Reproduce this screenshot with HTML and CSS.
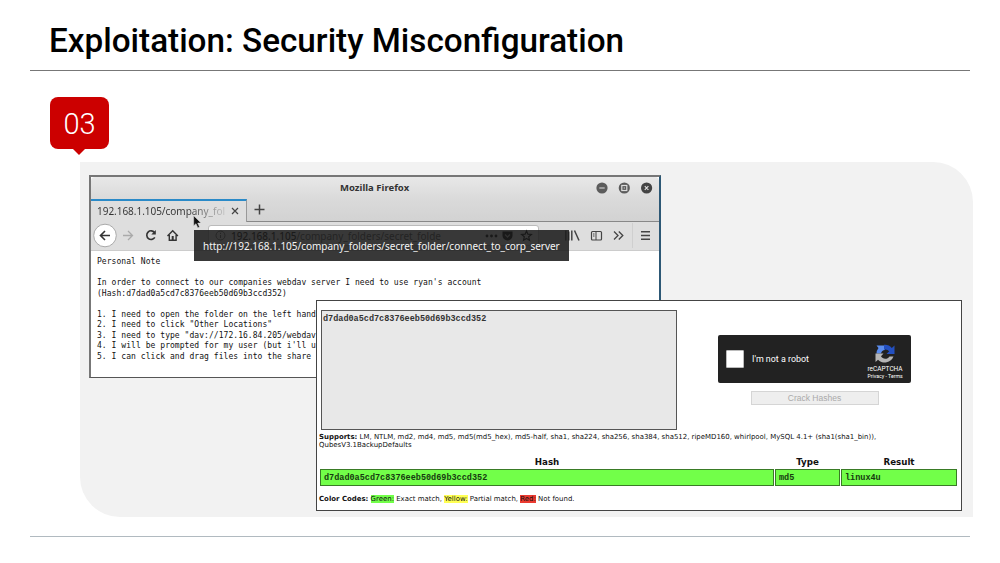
FILE: index.html
```html
<!DOCTYPE html>
<html lang="en">
<head>
<meta charset="utf-8">
<title>Exploitation: Security Misconfiguration</title>
<link rel="stylesheet" href="styles.css">
</head>
<body>
<main class="slide">
  <header class="heading"><h1>Exploitation: Security Misconfiguration</h1></header>
  <section class="stage">
    <div class="step">03</div>
    <article class="browser">
      <div class="titlebar">
        <span class="window-title">Mozilla Firefox</span>
        <svg class="controls" width="58" height="12" viewBox="0 0 58 12">
          <g fill="#5c5c5c"><circle cx="6" cy="6" r="5.6"/><circle cx="28.300" cy="6" r="5.600"/><circle cx="50.600" cy="6" r="5.600" fill="#444"/></g>
          <g fill="none" stroke="#ddd" stroke-width="1.200"><path d="M3.300 6h5.400M48.800 4.200l3.600 3.600m0-3.600-3.600 3.600"/><rect x="25.800" y="3.500" width="5" height="5"/><path d="M27.700 6h1.200"/></g>
        </svg>
      </div>
      <div class="tabs">
        <div class="tab"><span class="tab-name">192.168.1.105/company_fol</span>
          <svg width="8" height="8" viewBox="0 0 8 8"><path d="M1 1l6 6M7 1L1 7" stroke="#444" stroke-width="1.200"/></svg>
        </div>
        <div class="new-tab"><svg width="11" height="11" viewBox="0 0 11 11"><path d="M5.500.5v10M.5 5.500h10" stroke="#444" stroke-width="1.500"/></svg></div>
      </div>
      <div class="toolbar">
        <svg class="nav" width="96" height="28" viewBox="0 0 96 28" fill="none" stroke="#333" stroke-width="1.600">
          <circle cx="14" cy="13.500" r="11.300" fill="#fff" stroke="#aaa" stroke-width="1"/>
          <path d="M19 13.500H9.500M14 9l-4.500 4.500L14 18"/>
          <path d="M32 13.500h9.500M37 9l4.500 4.500L37 18" stroke="#aaa" stroke-width="1.300"/>
          <path d="M63.500 10.500a4.300 4.300 0 1 0 .3 4.800"/><path d="M64.800 8v4.500h-4.500z" fill="#333" stroke="none"/>
          <path d="M76.500 14l5.200-5.200 5.200 5.200M78.300 13v5.200h6.800V13" stroke-width="1.400"/><path d="M81.700 14v4" stroke-width="2"/>
        </svg>
        <div class="address">
          <svg width="13" height="13" viewBox="0 0 13 13"><circle cx="6.500" cy="6.500" r="4.500" fill="none" stroke="#666"/><path d="M6.500 6v3M6.500 3.800v1.200" stroke="#666"/></svg>
          <span class="address-text"><b>192.168.1.105</b>/company_folders/secret_folde</span>
          <svg width="53" height="14" viewBox="0 0 53 14" fill="#000"><circle cx="2" cy="7" r="1.400"/><circle cx="6.500" cy="7" r="1.400"/><circle cx="11" cy="7" r="1.400"/><path d="M17.500 2.500h10v4a5 5 0 0 1-10 0z"/><path d="M20 5.500l2.500 2.500L25 5.500" stroke="#bbb" fill="none" stroke-width="1.300"/><path d="M41.500 2l1.400 3.200 3.500.3-2.700 2.300.8 3.500-3-1.800-3 1.800.8-3.500-2.700-2.300 3.500-.3z" fill="none" stroke="#000" stroke-width="1.200"/></svg>
        </div>
        <svg class="tools" width="88" height="28" viewBox="0 0 88 28" fill="none" stroke="#444" stroke-width="1.500">
          <path d="M.8 8.500v10M3.800 9.500v9M6.800 8.500v10M9.500 8.500l4.500 10"/>
          <rect x="26.500" y="9.500" width="10" height="8.500" rx="1" stroke-width="1.200"/><path d="M31 9.500v8.500M28 12h1.500M28 14h1.500" stroke-width="1"/>
          <path d="M49 9.500l4 4-4 4M53.800 9.500l4 4-4 4" stroke-width="1.300"/>
          <path d="M67.500 1v25" stroke="#cfcfcf" stroke-width="1"/><path d="M76 9.800h9M76 13.500h9M76 17.200h9"/>
        </svg>
      </div>
      <pre class="note">Personal Note

In order to connect to our companies webdav server I need to use ryan's account
(Hash:d7dad0a5cd7c8376eeb50d69b3ccd352)

1. I need to open the folder on the left hand
2. I need to click "Other Locations"
3. I need to type "dav://172.16.84.205/webdav
4. I will be prompted for my user (but i'll u
5. I can click and drag files into the share</pre>
      <div class="tooltip">http://192.168.1.105/company_folders/secret_folder/connect_to_corp_server</div>
      <svg class="pointer" width="9" height="14" viewBox="0 0 9 14"><path d="M.7.700v10l2.300-2 1.800 4 1.700-.8-1.800-3.800 3.300-.2z" fill="#111" stroke="#ddd" stroke-width=".5"/></svg>
    </article>
    <article class="cracker">
      <div class="form">
        <div class="hash-input">d7dad0a5cd7c8376eeb50d69b3ccd352</div>
        <div class="verify">
          <div class="captcha">
            <span class="check"></span><span class="robot">I'm not a robot</span>
            <div class="brand">
              <svg width="22" height="22" viewBox="0 0 22 22">
                <path d="M2.500 10.500A9 9 0 0 1 4.500 5L2.500 2.500H11V7a4.500 4.500 0 0 0-4 3.500z" fill="#5b8def"/>
                <path d="M10 1.800A9 9 0 0 1 17.800 5L20.500 2.500v8.500h-8l2.700-2.700A5 5 0 0 0 10 6.800z" fill="#2450c0"/>
                <path d="M1.500 10.500h8L7 13.200a5 5 0 0 0 8.500.3h4A9.500 9.500 0 0 1 4 16.800L1.500 19z" fill="#b5b5b5"/>
              </svg>
              <span class="brand-name">reCAPTCHA</span><span class="terms">Privacy - Terms</span>
            </div>
          </div>
          <div class="crack">Crack Hashes</div>
        </div>
      </div>
      <p class="supports"><b>Supports:</b> LM, NTLM, md2, md4, md5, md5(md5_hex), md5-half, sha1, sha224, sha256, sha384, sha512, ripeMD160, whirlpool, MySQL 4.1+ (sha1(sha1_bin)),<br>QubesV3.1BackupDefaults</p>
      <div class="results">
        <span class="th">Hash</span><span class="th">Type</span><span class="th">Result</span>
        <span class="td">d7dad0a5cd7c8376eeb50d69b3ccd352</span><span class="td">md5</span><span class="td">linux4u</span>
      </div>
      <p class="codes"><b>Color Codes:</b> <mark class="green">Green:</mark> Exact match, <mark class="yellow">Yellow:</mark> Partial match, <mark class="red">Red:</mark> Not found.</p>
    </article>
  </section>
  <footer class="rule"></footer>
</main>
</body>
</html>
```
FILE: styles.css
```css
* { box-sizing: border-box; }
body { margin: 0; background: #fff; }
p, pre, h1 { margin: 0; }
svg { flex: none; display: block; }
.slide { width: 1000px; height: 563px; padding: 0 28px 0 30px; overflow: hidden; display: flex; flex-direction: column; }
.heading { height: 71px; width: 940px; padding: 21px 0 0 19px; border-bottom: 1px solid #777; }
h1 { font: 500 33.270px/39px Roboto, sans-serif; color: #000; white-space: nowrap; }
.stage { position: relative; width: 893px; height: 355px; margin: 91px 0 0 50px; background: #f2f2f2; border-radius: 0 40px 0 40px; }
.step { position: absolute; left: -30px; top: -65px; width: 59px; height: 52px; border-radius: 8px; background: #c00; color: #fff; font: 300 29px/54px Roboto, sans-serif; text-align: center; }
.step::after { content: ""; position: absolute; left: 23px; top: 52px; border: 6.5px solid transparent; border-top-color: #c00; border-bottom: 0; }

.browser { position: absolute; left: 9px; top: 13px; width: 572px; height: 203px; border: 2px solid #777; border-right: 2px solid #2d5875; border-bottom: 1px solid #555; background: #fff; font-family: "Noto Sans", sans-serif; }
.titlebar { height: 22px; background: linear-gradient(#e8e8e8, #dadada); border-radius: 4px 4px 0 0; display: flex; align-items: center; justify-content: flex-end; padding-right: 5px; }
.window-title { width: 70px; margin-right: 186px; font: 700 9.500px/20px "Noto Sans", sans-serif; letter-spacing: .02px; white-space: nowrap; color: #333; }
.tabs { height: 23px; display: flex; background: linear-gradient(#dadada, #d2d2d2); }
.tab { width: 156px; border-top: 2px solid #2a8ac8; border-right: 1px solid #999; background: #dedede; display: flex; align-items: center; padding: 0 0 2px 6px; gap: 4px; }
.tab-name { width: 130px; font-size: 10px; letter-spacing: -.03px; white-space: nowrap; color: transparent; background: linear-gradient(90deg, #333 68%, #ccc 100%); background-clip: text; -webkit-background-clip: text; }
.new-tab { flex: 1; border-bottom: 1px solid #888; padding: 5px 0 0 7px; }
.toolbar { height: 29px; background: #dedede; border-bottom: 1px solid #ccc; display: flex; padding-right: 6px; }
.address { width: 331px; height: 21px; margin: 3px 0 0 21px; border: 1px solid #bbb; border-radius: 3px; background: #fff; display: flex; align-items: center; padding-left: 5px; }
.address-text { width: 259px; font-size: 10px; padding-left: 4px; white-space: nowrap; color: #555; }
.address-text b { font-weight: 500; color: #111; }
.tools { margin-left: auto; }
.note { padding: 6px 0 0 6px; font: 8px/10.500px "DejaVu Sans Mono", monospace; letter-spacing: .05px; color: #111; }
.tooltip { position: absolute; left: 103px; top: 53px; width: 375px; height: 31px; background: rgba(28,28,28,.88); color: #f4f4f4; padding-left: 9px; font-size: 10px; line-height: 32px; letter-spacing: -.02px; white-space: nowrap; }
.pointer { position: absolute; left: 102px; top: 38px; }

.cracker { position: absolute; left: 236px; top: 138px; width: 646px; height: 211px; border: 1px solid #444; background: #fff; padding: 9px 3px 0 2px; font: 6.960px/8px "DejaVu Sans", sans-serif; color: #111; }
.form { display: flex; padding-left: 2px; }
.hash-input { width: 356px; height: 120px; border: 1px solid #555; background: #e8e8e8; padding: 3px 1px; font: 700 8.500px/10px "Liberation Mono", monospace; color: #333; }
.verify { width: 193px; margin: 25px 0 0 41px; display: flex; flex-direction: column; align-items: center; gap: 8px; }
.captcha { width: 193px; height: 48px; border-radius: 2px; background: #222; color: #fff; display: flex; align-items: center; padding-left: 8px; font-family: Roboto, sans-serif; }
.check { width: 18px; height: 18px; background: #fff; border: 1px solid #bbb; border-radius: 1px; flex: none; }
.robot { width: 115px; padding-left: 8px; font-size: 8.900px; white-space: nowrap; flex: none; }
.brand { width: 52px; flex: none; display: flex; flex-direction: column; align-items: center; white-space: nowrap; padding-top: 4px; }
.brand-name { font-size: 6.500px; line-height: 8px; }
.terms { font-size: 5.200px; line-height: 7px; }
.crack { width: 128px; height: 14px; border: 1px solid #d5d5d5; background: #eee; color: #aaa; text-align: center; font: 8.500px/12px "Liberation Sans", sans-serif; }
.supports { padding-top: 3px; white-space: nowrap; }
.results { display: grid; grid-template-columns: 454px 65px 116px; column-gap: 1px; padding: 7px 0 0 1px; }
.th { font-weight: 700; font-size: 8.700px; line-height: 13px; text-align: center; height: 13px; }
.td { height: 17px; border: 1px solid #397b25; background: #72ff49; padding: 1px 0 0 3px; font: 700 8.500px/15px "Liberation Mono", monospace; color: #163b10; }
.codes { padding-top: 9px; white-space: nowrap; }
mark { color: #111; }
.green { background: #72ff49; }
.yellow { background: #ffff54; }
.red { background: #ea3a30; }
.rule { width: 940px; height: 20px; margin-top: 19px; border-top: 1px solid #b1bac0; }
```
